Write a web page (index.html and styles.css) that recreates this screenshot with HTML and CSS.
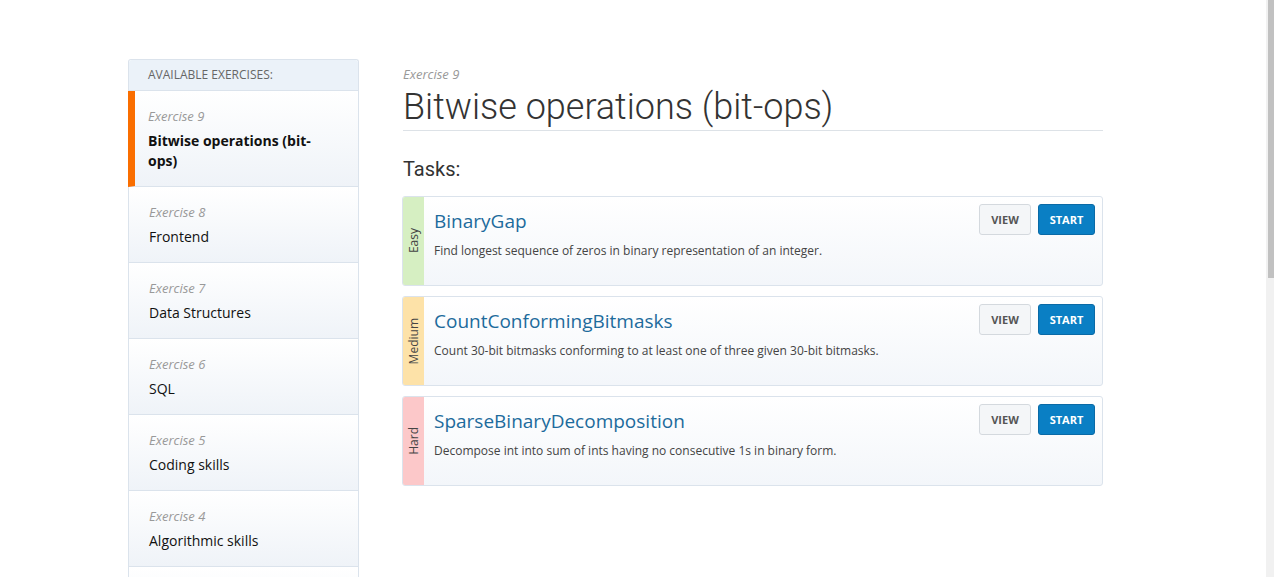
FILE: index.html
```html
<!DOCTYPE html>
<html>
<head>
<meta charset="utf-8">
<link rel="stylesheet" href="styles.css">
</head>
<body>
<div class="page">
  <aside class="sidebar">
    <div class="side-head">Available exercises:</div>
    <div class="side-item active">
      <div class="ex-num">Exercise 9</div>
      <div class="ex-title">Bitwise operations (bit-ops)</div>
    </div>
    <div class="side-item">
      <div class="ex-num">Exercise 8</div>
      <div class="ex-title">Frontend</div>
    </div>
    <div class="side-item">
      <div class="ex-num">Exercise 7</div>
      <div class="ex-title">Data Structures</div>
    </div>
    <div class="side-item">
      <div class="ex-num">Exercise 6</div>
      <div class="ex-title">SQL</div>
    </div>
    <div class="side-item">
      <div class="ex-num">Exercise 5</div>
      <div class="ex-title">Coding skills</div>
    </div>
    <div class="side-item">
      <div class="ex-num">Exercise 4</div>
      <div class="ex-title">Algorithmic skills</div>
    </div>
    <div class="side-item">
      <div class="ex-num">Exercise 3</div>
      <div class="ex-title">Sorting</div>
    </div>
  </aside>
  <main class="main">
    <div class="main-num">Exercise 9</div>
    <h1 class="main-title">Bitwise operations (bit-ops)</h1>
    <h2 class="tasks-head">Tasks:</h2>
    <div class="task">
      <div class="level easy"><span>Easy</span></div>
      <div class="task-body">
        <div class="task-name">BinaryGap</div>
        <div class="task-desc">Find longest sequence of zeros in binary representation of an integer.</div>
      </div>
      <div class="task-actions">
        <span class="btn btn-view">View</span>
        <span class="btn btn-start">Start</span>
      </div>
    </div>
    <div class="task">
      <div class="level medium"><span>Medium</span></div>
      <div class="task-body">
        <div class="task-name">CountConformingBitmasks</div>
        <div class="task-desc">Count 30-bit bitmasks conforming to at least one of three given 30-bit bitmasks.</div>
      </div>
      <div class="task-actions">
        <span class="btn btn-view">View</span>
        <span class="btn btn-start">Start</span>
      </div>
    </div>
    <div class="task">
      <div class="level hard"><span>Hard</span></div>
      <div class="task-body">
        <div class="task-name">SparseBinaryDecomposition</div>
        <div class="task-desc">Decompose int into sum of ints having no consecutive 1s in binary form.</div>
      </div>
      <div class="task-actions">
        <span class="btn btn-view">View</span>
        <span class="btn btn-start">Start</span>
      </div>
    </div>
  </main>
</div>
<div class="scrollbar"><div class="thumb"></div></div>
</body>
</html>
```

FILE: styles.css
```css
html, body {
  margin: 0;
  padding: 0;
  height: 577px;
  overflow: hidden;
  background: #fff;
}
body {
  font-family: "Open Sans", "Liberation Sans", sans-serif;
  color: #222;
}
.page {
  display: flex;
  align-items: flex-start;
  gap: 44px;
  padding: 59px 0 0 128px;
}
.sidebar {
  width: 231px;
  flex: none;
  box-sizing: border-box;
  border: 1px solid #dbe3ec;
  border-bottom: none;
  border-radius: 3px 3px 0 0;
}
.side-head {
  background: #ebf2f9;
  color: #666;
  font-size: 12px;
  text-transform: uppercase;
  line-height: 30px;
  padding-left: 19px;
  border-bottom: 1px solid #dbe3ec;
  border-radius: 3px 3px 0 0;
}
.side-item {
  padding: 15px 20px 15px 20px;
  margin-left: -1px;
  border-left: 1px solid #dbe3ec;
  border-bottom: 1px solid #dbe3ec;
  background: linear-gradient(#ffffff, #eff3f8);
}
.side-item.active {
  border-left: 7px solid #fa6e00;
  padding-left: 13px;
  padding-right: 40px;
}
.ex-num {
  font-style: italic;
  font-size: 13px;
  color: #999;
  line-height: 20px;
  margin-bottom: 5px;
}
.ex-title {
  font-size: 14px;
  line-height: 20px;
  color: #111;
}
.active .ex-title {
  font-weight: 700;
}
.main {
  width: 700px;
  flex: none;
}
.main-num {
  font-style: italic;
  font-size: 13px;
  color: #999;
  line-height: 18px;
  margin-top: 6px;
}
.main-title {
  font-family: Roboto, "Liberation Sans", sans-serif;
  font-weight: 300;
  font-size: 36px;
  line-height: 46px;
  color: #333;
  margin: 1px 0 0 0;
  padding-bottom: 0;
  border-bottom: 1px solid #dde2e7;
}
.tasks-head {
  font-family: Roboto, "Liberation Sans", sans-serif;
  font-weight: 400;
  font-size: 20px;
  line-height: 26px;
  color: #333;
  margin: 25px 0 14px 0;
}
.task {
  display: flex;
  height: 90px;
  box-sizing: border-box;
  border: 1px solid #dbe3ec;
  border-radius: 3px;
  background: linear-gradient(#ffffff, #f3f6fa);
  margin-bottom: 10px;
  margin-left: -1px;
  overflow: hidden;
}
.level {
  width: 21px;
  flex: none;
  display: flex;
  align-items: center;
  justify-content: center;
  font-size: 12px;
  color: #444;
}
.level span {
  writing-mode: vertical-rl;
  transform: rotate(180deg);
}
.easy { background: #d6efc2; }
.medium { background: #fde2a8; }
.hard { background: #fcc8c9; }
.task-body {
  flex: 1;
  padding: 11px 0 0 10px;
}
.task-name {
  font-size: 19px;
  line-height: 26px;
  color: #1d6b9c;
}
.task-desc {
  font-size: 12px;
  line-height: 20px;
  color: #444;
  margin-top: 7px;
}
.task-actions {
  display: flex;
  gap: 7px;
  padding: 7px 7px 0 0;
  align-items: flex-start;
}
.btn {
  display: block;
  box-sizing: border-box;
  height: 31px;
  line-height: 29px;
  font-size: 11px;
  font-weight: 700;
  text-transform: uppercase;
  border-radius: 3px;
  text-align: center;
}
.btn-view {
  width: 52px;
  background: #f4f6f8;
  border: 1px solid #d4d9de;
  color: #555;
}
.btn-start {
  width: 57px;
  background: #0a7fc4;
  border: 1px solid #0a6aa6;
  color: #fff;
}
.scrollbar {
  position: fixed;
  top: 0;
  right: 0;
  width: 8px;
  height: 577px;
  background: #f1f1f1;
}
.thumb {
  margin-left: 2px;
  width: 6px;
  height: 278px;
  background: #c1c1c1;
}
```
